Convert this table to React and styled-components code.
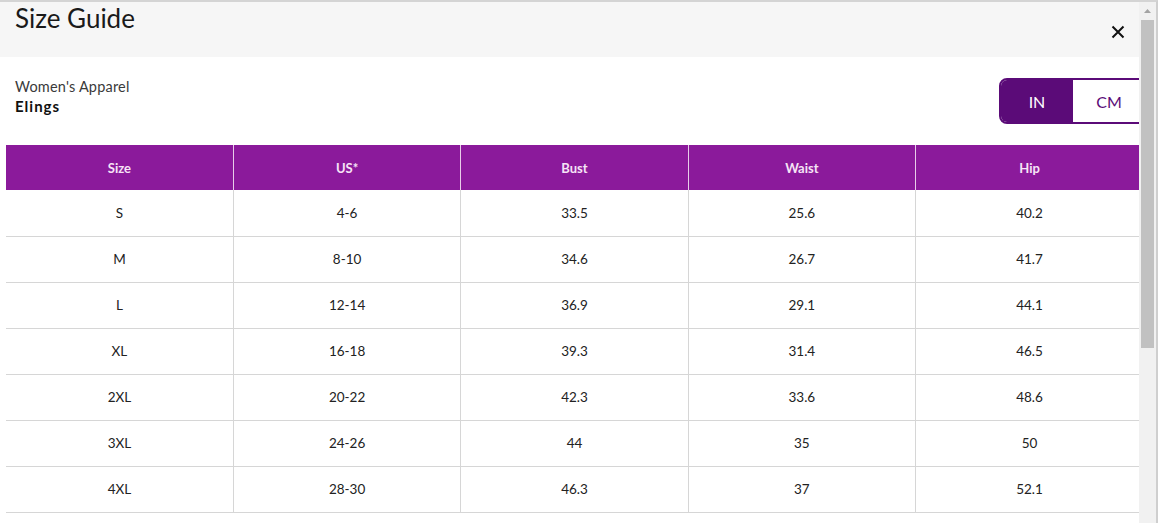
import React from "react";
import styled, { createGlobalStyle } from "styled-components";

const Global = createGlobalStyle`
  html, body { margin: 0; padding: 0; background: #fff; overflow: hidden; }
  body { font-family: Lato, "Open Sans", sans-serif; color: #222; }
  * { box-sizing: border-box; }
`;

const Frame = styled.div`
  width: 1158px;
  height: 523px;
  display: flex;
  border-top: 2px solid #d4d4d4;
  border-right: 2px solid #cfcfcf;
  overflow: hidden;
`;

const Content = styled.div`
  width: 1139px;
  flex: none;
  overflow: hidden;
  display: flex;
  flex-direction: column;
`;

const Header = styled.div`
  height: 55px;
  background: #f6f6f6;
  display: flex;
  justify-content: space-between;
  padding: 1px 0 0 15px;
`;

const Title = styled.h1`
  margin: 0;
  font-size: 26px;
  line-height: 30px;
  font-weight: 400;
  color: #1a1a1a;
`;

const Close = styled.button`
  border: none;
  background: none;
  padding: 0;
  width: 16px;
  height: 16px;
  margin: 21px 13px 0 0;
  display: flex;
  align-items: center;
  justify-content: center;
  cursor: pointer;
`;

const SubRow = styled.div`
  display: flex;
  justify-content: space-between;
  align-items: flex-start;
  padding: 21px 0 0 15px;
  height: 88px;
`;

const Brand = styled.div`
  display: flex;
  flex-direction: column;
`;

const Category = styled.span`
  font-size: 14.5px;
  line-height: 18px;
  color: #3a3a3a;
  letter-spacing: 0.2px;
`;

const Name = styled.span`
  font-size: 15px;
  line-height: 20px;
  font-weight: 700;
  color: #111;
  letter-spacing: 1px;
`;

const Toggle = styled.div`
  display: flex;
  height: 46px;
  margin-right: -8px;
  border: 2px solid #5b0b78;
  border-radius: 8px;
  overflow: hidden;
`;

const ToggleBtn = styled.button`
  border: none;
  font-family: Lato, sans-serif;
  font-size: 16px;
  width: ${(p) => p.$w || 72}px;
  background: ${(p) => (p.$active ? "#5b0b78" : "#fff")};
  color: ${(p) => (p.$active ? "#fff" : "#5b0b78")};
  padding: 0;
  cursor: pointer;
`;

const Table = styled.table`
  margin-left: 6px;
  width: 1137px;
  flex: none;
  border-collapse: collapse;
  table-layout: fixed;
`;

const Th = styled.th`
  background: #8b1a9b;
  color: #f6e4f6;
  font-size: 13px;
  font-weight: 700;
  height: 45px;
  padding: 0;
  text-align: center;
  border-left: 1px solid #e8cde9;
  &:first-child { border-left: none; }
`;

const Td = styled.td`
  height: 46px;
  padding: 0;
  text-align: center;
  font-size: 13.5px;
  color: #222;
  border-bottom: 1px solid #d6d6d6;
  border-left: 1px solid #d6d6d6;
  &:first-child { border-left: none; }
`;

const Scrollbar = styled.div`
  width: 17px;
  flex: none;
  background: #f1f1f1;
  display: flex;
  flex-direction: column;
  align-items: center;
`;

const Arrow = styled.div`
  height: 18px;
  display: flex;
  align-items: center;
  justify-content: center;
`;

const Thumb = styled.div`
  width: 13px;
  height: 328px;
  background: #c1c1c1;
`;

const rows = [
  ["S", "4-6", "33.5", "25.6", "40.2"],
  ["M", "8-10", "34.6", "26.7", "41.7"],
  ["L", "12-14", "36.9", "29.1", "44.1"],
  ["XL", "16-18", "39.3", "31.4", "46.5"],
  ["2XL", "20-22", "42.3", "33.6", "48.6"],
  ["3XL", "24-26", "44", "35", "50"],
  ["4XL", "28-30", "46.3", "37", "52.1"],
];

export default function App() {
  return (
    <>
      <Global />
      <Frame>
        <Content>
          <Header>
            <Title>Size Guide</Title>
            <Close aria-label="Close">
              <svg width="14" height="14" viewBox="0 0 14 14">
                <path d="M1.5 1.5L12.5 12.5M12.5 1.5L1.5 12.5" stroke="#111" strokeWidth="2" />
              </svg>
            </Close>
          </Header>
          <SubRow>
            <Brand>
              <Category>Women's Apparel</Category>
              <Name>Elings</Name>
            </Brand>
            <Toggle>
              <ToggleBtn $active $w={72}>IN</ToggleBtn>
              <ToggleBtn $w={72}>CM</ToggleBtn>
            </Toggle>
          </SubRow>
          <Table>
            <thead>
              <tr>
                {["Size", "US*", "Bust", "Waist", "Hip"].map((h) => (
                  <Th key={h}>{h}</Th>
                ))}
              </tr>
            </thead>
            <tbody>
              {rows.map((r) => (
                <tr key={r[0]}>
                  {r.map((c, i) => (
                    <Td key={i}>{c}</Td>
                  ))}
                </tr>
              ))}
            </tbody>
          </Table>
        </Content>
        <Scrollbar>
          <Arrow>
            <svg width="7" height="4" viewBox="0 0 7 4">
              <path d="M0 4L3.5 0L7 4Z" fill="#a3a3a3" />
            </svg>
          </Arrow>
          <Thumb />
        </Scrollbar>
      </Frame>
    </>
  );
}
